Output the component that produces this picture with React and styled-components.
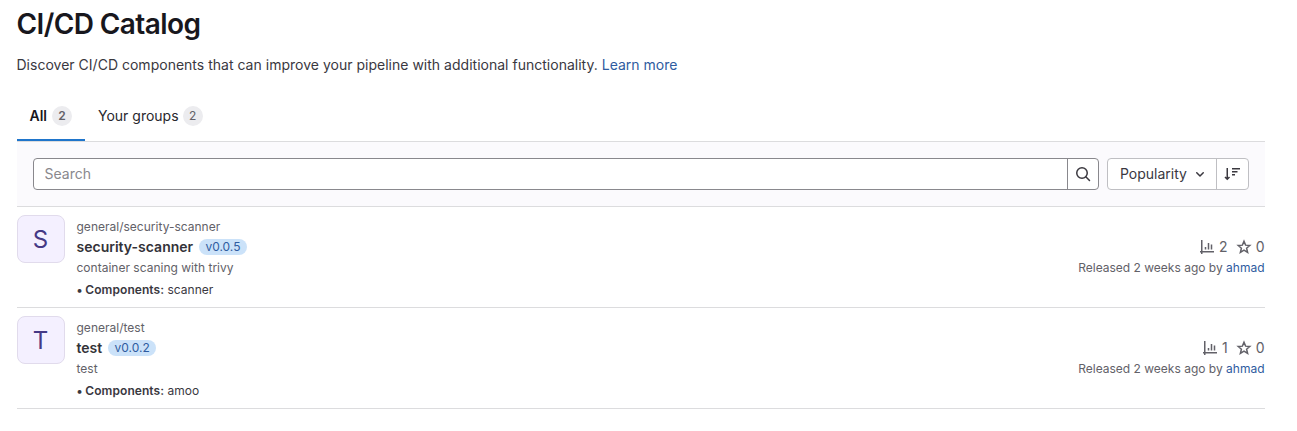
import React from 'react';
import styled, { createGlobalStyle } from 'styled-components';

const GlobalStyle = createGlobalStyle`
  *, *::before, *::after { box-sizing: border-box; }
  body {
    margin: 0;
    background: #fff;
    color: #3a383f;
    font-family: Inter, "Liberation Sans", sans-serif;
    font-size: 14px;
    line-height: 20px;
  }
`;

const Page = styled.main`
  width: 1248px;
  margin-left: 16.5px;
  padding-top: 6px;
`;

const Title = styled.h1`
  margin: 0;
  font-size: 28px;
  line-height: 36px;
  font-weight: 600;
  letter-spacing: -0.6px;
  color: #18171d;
`;

const Intro = styled.p`
  margin: 13px 0 0;
  letter-spacing: 0.012px;
`;

const Link = styled.a`
  color: #2f5ca0;
  text-decoration: none;
`;

const Tabs = styled.nav`
  display: flex;
  height: 51px;
  margin-top: 16px;
  border-bottom: 1px solid #dcdcde;
`;

const Tab = styled.button`
  display: flex;
  align-items: center;
  gap: ${(p) => (p.$active ? 5 : 4)}px;
  height: 50px;
  padding: 0 13px;
  border: 0;
  background: none;
  font: inherit;
  font-weight: ${(p) => (p.$active ? 600 : 400)};
  color: ${(p) => (p.$active ? '#18171d' : '#28272d')};
  box-shadow: ${(p) => (p.$active ? 'inset 0 -2px 0 0 #1f75cb' : 'none')};
`;

const Count = styled.span`
  min-width: 20px;
  height: 20px;
  border-radius: 10px;
  background: #ececef;
  color: #626168;
  font-size: 12px;
  line-height: 20px;
  text-align: center;
`;

const Toolbar = styled.div`
  display: flex;
  gap: 8px;
  padding: 16px;
  background: #fbfafd;
  border-bottom: 1px solid #dcdcde;
`;

const SearchBox = styled.div`
  display: flex;
  flex: 1;
  height: 32px;
  border: 1px solid #89888d;
  border-radius: 4px;
  background: #fff;
`;

const SearchInput = styled.input`
  flex: 1;
  min-width: 0;
  padding: 0 11px;
  border: 0;
  outline: 0;
  background: none;
  font: inherit;
  &::placeholder { color: #89888d; opacity: 1; }
`;

const SearchButton = styled.button`
  display: flex;
  align-items: center;
  justify-content: center;
  width: 31px;
  padding: 0;
  border: 0;
  border-left: 1px solid #89888d;
  background: none;
  color: #3a383f;
`;

const SortGroup = styled.div`
  display: flex;
  width: 142px;
  height: 32px;
  border: 1px solid #bfbfc3;
  border-radius: 4px;
  background: #fff;
`;

const SortField = styled.button`
  display: flex;
  flex: 1;
  align-items: center;
  gap: 5px;
  padding: 0 0 0 12.5px;
  border: 0;
  background: none;
  color: #3a383f;
  font: inherit;
`;

const SortDirection = styled.button`
  display: flex;
  align-items: center;
  justify-content: center;
  width: 32px;
  padding: 0 1px 0 0;
  border: 0;
  border-left: 1px solid #bfbfc3;
  background: none;
  color: #3a383f;
`;

const List = styled.ul`
  margin: 0;
  padding: 0;
  list-style: none;
`;

const Item = styled.li`
  display: flex;
  height: 101px;
  padding-top: 8px;
  border-bottom: 1px solid #dcdcde;
`;

const Avatar = styled.div`
  width: 48px;
  height: 48px;
  border: 1px solid #e1dbec;
  border-radius: 8px;
  background: #f4f0ff;
  color: #453985;
  font-size: 24px;
  line-height: 48px;
  text-align: center;
`;

const Details = styled.div`
  flex: 1;
  margin-left: 12px;
  font-size: 12px;
  letter-spacing: 0.01px;
  color: #626168;
`;

const Path = styled.div`
  height: 22px;
  line-height: 23px;
`;

const NameRow = styled.div`
  display: flex;
  align-items: center;
  gap: 6px;
  height: 20px;
`;

const Name = styled.strong`
  font-size: 14px;
  font-weight: 600;
  color: #333238;
`;

const Version = styled.span`
  height: 16px;
  padding: 0 6.25px;
  border-radius: 8px;
  background: #cbe2f9;
  color: #2f5ca0;
  line-height: 16px;
`;

const Description = styled.div`
  height: 22px;
  line-height: 22px;
`;

const Components = styled.div`
  height: 22px;
  line-height: 22px;
  color: #3a383f;
  strong { font-weight: 600; letter-spacing: 0.06px; }
`;

const Bullet = styled.span`
  font-weight: 600;
  letter-spacing: -0.6px;
`;

const Meta = styled.div`
  display: flex;
  flex-direction: column;
  align-items: flex-end;
  padding-top: 22px;
  color: #626168;
`;

const Stats = styled.div`
  display: flex;
  gap: 8px;
  height: 20px;
`;

const Stat = styled.span`
  display: flex;
  align-items: center;
  gap: 4px;
`;

const Released = styled.div`
  font-size: 12px;
  line-height: 22px;
`;

const Icon = styled.svg.attrs({ viewBox: '0 0 16 16', fill: 'none', stroke: 'currentColor', 'aria-hidden': true })`
  display: block;
  flex: none;
  width: 16px;
  height: 16px;
  stroke-width: 1.5;
`;

const SearchIcon = () => (
  <Icon>
    <circle cx="7" cy="7" r="5.25" />
    <path d="M10.8 10.8 14.5 14.5" strokeLinecap="round" />
  </Icon>
);

const ChevronIcon = () => (
  <Icon>
    <path d="m4.75 6.75 3.25 3.2 3.25-3.2" strokeLinecap="round" strokeLinejoin="round" />
  </Icon>
);

const SortIcon = () => (
  <Icon>
    <path d="M3.25 2v11.25M1 11l2.25 2.25L5.5 11M8 2.75h8M8 5.75h5.5M8 8.75h3" />
  </Icon>
);

const ChartIcon = () => (
  <Icon>
    <path d="M2.75 1v14M1 12.75h14M6.5 8v2.5M9.5 4v6.5M12.5 5.5v5" />
  </Icon>
);

const StarIcon = () => (
  <Icon>
    <path d="m8 2.25 1.6 3.9 4.2.3-3.2 2.75 1 4.1L8 11.1l-3.6 2.2 1-4.1-3.2-2.75 4.2-.3z" />
  </Icon>
);

const resources = [
  { initial: 'S', path: 'general/security-scanner', name: 'security-scanner', version: 'v0.0.5', description: 'container scaning with trivy', component: 'scanner', usage: 2, stars: 0 },
  { initial: 'T', path: 'general/test', name: 'test', version: 'v0.0.2', description: 'test', component: 'amoo', usage: 1, stars: 0 },
];

const Resource = ({ item }) => (
  <Item>
    <Avatar>{item.initial}</Avatar>
    <Details>
      <Path>{item.path}</Path>
      <NameRow>
        <Name>{item.name}</Name>
        <Version>{item.version}</Version>
      </NameRow>
      <Description>{item.description}</Description>
      <Components><Bullet>•</Bullet> <strong>Components:</strong> {item.component}</Components>
    </Details>
    <Meta>
      <Stats>
        <Stat><ChartIcon />{item.usage}</Stat>
        <Stat><StarIcon />{item.stars}</Stat>
      </Stats>
      <Released>Released 2 weeks ago by <Link href="#">ahmad</Link></Released>
    </Meta>
  </Item>
);

export default function App() {
  return (
    <>
      <GlobalStyle />
      <Page>
        <Title>CI/CD Catalog</Title>
        <Intro>
          Discover CI/CD components that can improve your pipeline with additional functionality.{' '}
          <Link href="#">Learn more</Link>
        </Intro>
        <Tabs>
          <Tab $active>All <Count>2</Count></Tab>
          <Tab>Your groups <Count>2</Count></Tab>
        </Tabs>
        <Toolbar>
          <SearchBox>
            <SearchInput placeholder="Search" />
            <SearchButton aria-label="Search"><SearchIcon /></SearchButton>
          </SearchBox>
          <SortGroup>
            <SortField>Popularity <ChevronIcon /></SortField>
            <SortDirection aria-label="Sort direction"><SortIcon /></SortDirection>
          </SortGroup>
        </Toolbar>
        <List>
          {resources.map((item) => <Resource key={item.name} item={item} />)}
        </List>
      </Page>
    </>
  );
}
